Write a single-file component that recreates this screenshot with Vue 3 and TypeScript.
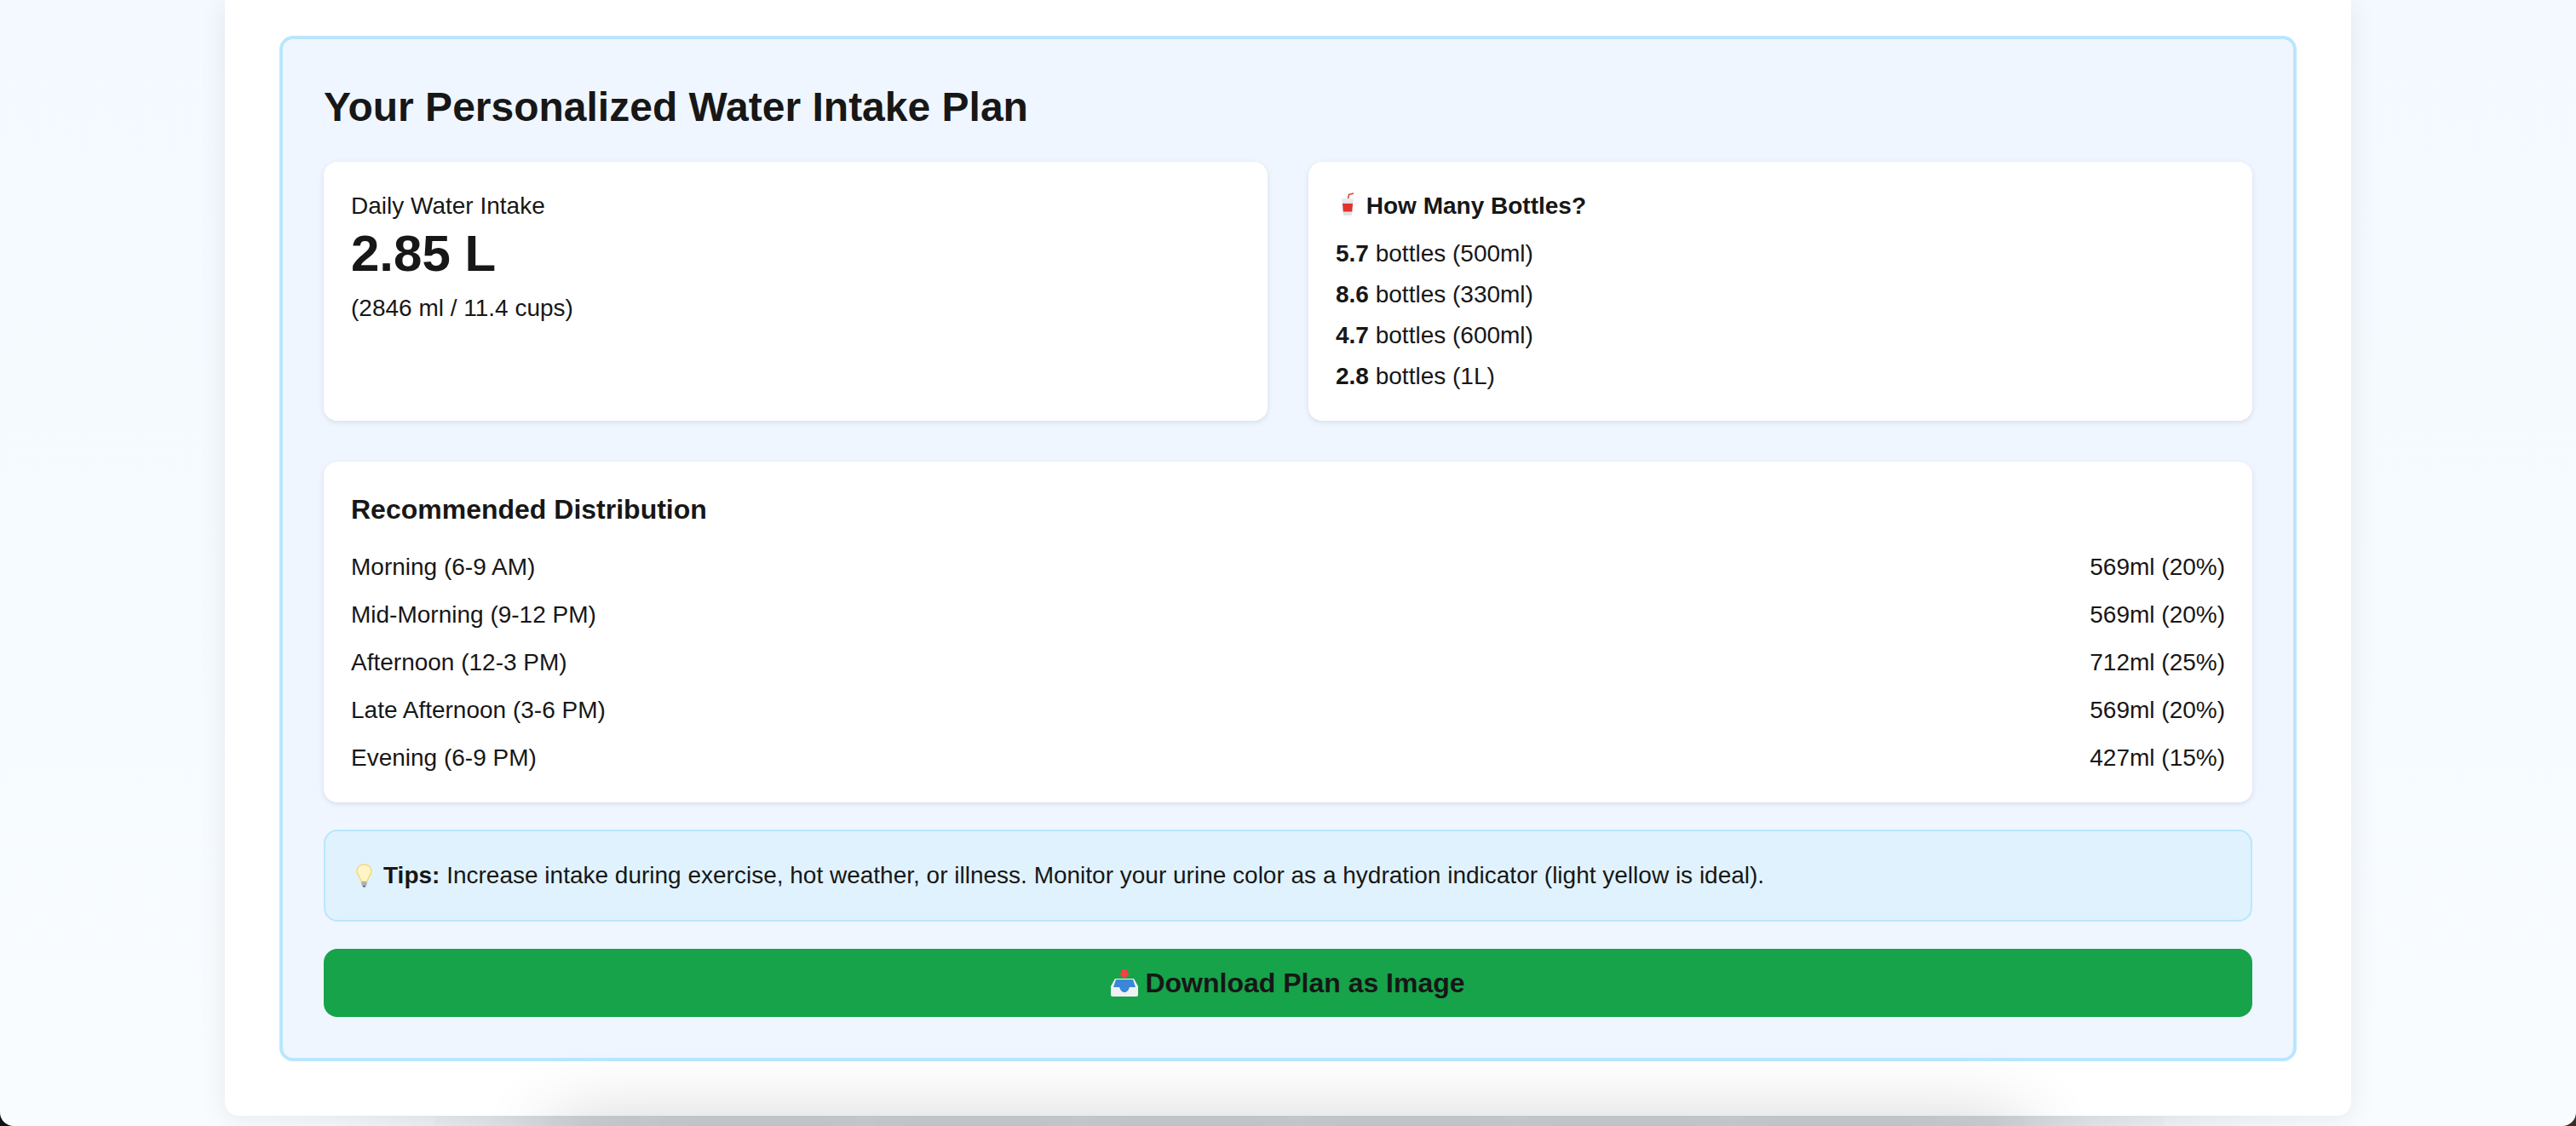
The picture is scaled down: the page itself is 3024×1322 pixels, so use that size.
<script setup lang="ts">
type BottleRow = { count: string; label: string };
type SlotRow = { name: string; amount: string };

const bottles: BottleRow[] = [
  { count: "5.7", label: "bottles (500ml)" },
  { count: "8.6", label: "bottles (330ml)" },
  { count: "4.7", label: "bottles (600ml)" },
  { count: "2.8", label: "bottles (1L)" },
];

const slots: SlotRow[] = [
  { name: "Morning (6-9 AM)", amount: "569ml (20%)" },
  { name: "Mid-Morning (9-12 PM)", amount: "569ml (20%)" },
  { name: "Afternoon (12-3 PM)", amount: "712ml (25%)" },
  { name: "Late Afternoon (3-6 PM)", amount: "569ml (20%)" },
  { name: "Evening (6-9 PM)", amount: "427ml (15%)" },
];
</script>

<template>
  <div class="page">
    <div class="window">
      <div class="under-shadow"></div>

      <main class="card">
        <section class="plan">
          <h2 class="plan-title">Your Personalized Water Intake Plan</h2>

          <div class="top-grid">
            <div class="box">
              <div class="intake-label">Daily Water Intake</div>
              <div class="intake-value">2.85 L</div>
              <div class="intake-sub">(2846 ml / 11.4 cups)</div>
            </div>
            <div class="box bottles">
              <h3 class="bottles-title">
                <svg class="emoji" viewBox="0 0 28 32" aria-hidden="true">
                  <path d="M14.5 10 L15.5 4.5 L21 3" fill="none" stroke="#e0483f" stroke-width="1.6" />
                  <rect x="7" y="9" width="14" height="4" rx="1.5" fill="#e8eaec" />
                  <path d="M7.6 13 H20.4 L19.2 27.5 Q19 29 17.5 29 H10.5 Q9 29 8.8 27.5 Z" fill="#dfe2e4" />
                  <path d="M8 15 H20 L19.2 24.5 H8.8 Z" fill="#e2322c" />
                </svg>
                How Many Bottles?
              </h3>
              <div v-for="row in bottles" :key="row.label + row.count" class="bottle-row">
                <strong>{{ row.count }}</strong> {{ row.label }}
              </div>
            </div>
          </div>

          <div class="box dist">
            <h3 class="dist-title">Recommended Distribution</h3>
            <div v-for="slot in slots" :key="slot.name" class="dist-row">
              <span>{{ slot.name }}</span>
              <span>{{ slot.amount }}</span>
            </div>
          </div>

          <div class="tips">
            <svg class="emoji bulb" viewBox="0 0 28 32" aria-hidden="true">
              <path d="M13.5 3 C8.2 3 5 6.6 5 11 C5 15.4 9.2 17.4 10 23 H17 C17.8 17.4 22 15.4 22 11 C22 6.6 18.8 3 13.5 3 Z" fill="#fff4c4" stroke="#f5d976" stroke-width="1.4" />
              <rect x="10.2" y="23" width="6.6" height="4.6" rx="1" fill="#adb1b5" />
              <rect x="11.6" y="27.6" width="3.8" height="2" rx="1" fill="#5f6367" />
            </svg>
            <strong>Tips:</strong> Increase intake during exercise, hot weather, or illness. Monitor your urine color as a hydration indicator (light yellow is ideal).
          </div>

          <button type="button" class="download">
            <svg class="tray" viewBox="0 0 32 32" aria-hidden="true">
              <path d="M13 0 H19 V4 H23 L16 11 L9 4 H13 Z" fill="#f0443e" />
              <path d="M5 11 H27 L32 20 V30 Q32 32 30 32 H2 Q0 32 0 30 V20 Z" fill="#f0f1f2" />
              <path d="M6 12 H26 L29 21 H22 Q20 27 16 27 Q12 27 10 21 H3 Z" fill="#3a86d8" />
            </svg>
            Download Plan as Image
          </button>
        </section>
      </main>

      <div class="over-shadow"></div>
    </div>
  </div>
</template>

<style scoped>
.page {
  height: 1322px;
  background: linear-gradient(90deg, #111 50%, #3d2c2c 50%);
  font-family: "Liberation Sans", Arial, sans-serif;
  color: #171717;
}

.window {
  position: relative;
  height: 100%;
  overflow: hidden;
  background: linear-gradient(180deg, #f3f9ff 0%, #f8fcff 100%);
  border-radius: 0 0 16px 16px;
}

.card {
  position: relative;
  z-index: 1;
  width: 2496px;
  height: 1310px;
  margin: 0 auto;
  padding: 42px 64px 64px;
  box-sizing: border-box;
  background: #fff;
  border-radius: 0 0 16px 16px;
  box-shadow: 0 4px 32px rgba(0, 0, 0, 0.08);
}

.plan {
  background: #eff6ff;
  border: 4px solid #bae6fd;
  border-radius: 16px;
  padding: 48px;
}

.plan-title {
  margin: 0 0 32px;
  font-size: 48px;
  line-height: 64px;
  font-weight: 700;
}

.top-grid {
  display: grid;
  grid-template-columns: 1fr 1fr;
  gap: 48px;
  margin-bottom: 48px;
}

.box {
  background: #fff;
  border-radius: 16px;
  padding: 32px;
  box-shadow: 0 2px 6px rgba(0, 0, 0, 0.1);
}

.intake-label {
  font-size: 28px;
  line-height: 40px;
}

.intake-value {
  margin: 6px 0 14px;
  font-size: 60px;
  line-height: 60px;
  font-weight: 700;
}

.intake-sub {
  font-size: 28px;
  line-height: 40px;
}

.bottles {
  padding-bottom: 28px;
}

.bottles-title {
  margin: 0 0 12px;
  font-size: 28px;
  line-height: 40px;
  font-weight: 700;
}

.bottle-row {
  font-size: 28px;
  line-height: 48px;
}

.dist {
  padding-bottom: 24px;
}

.dist-title {
  margin: 0 0 16px;
  font-size: 32px;
  line-height: 48px;
  font-weight: 700;
}

.dist-row {
  display: flex;
  justify-content: space-between;
  font-size: 28px;
  line-height: 56px;
}

.tips {
  margin-top: 32px;
  height: 108px;
  box-sizing: border-box;
  padding: 0 32px;
  display: flex;
  align-items: center;
  white-space: pre-wrap;
  background: #e0f2fe;
  border: 2px solid #bae6fd;
  border-radius: 16px;
  font-size: 28px;
}

.download {
  display: flex;
  align-items: center;
  justify-content: center;
  width: 100%;
  height: 80px;
  margin-top: 32px;
  border: 0;
  border-radius: 16px;
  background: #16a34a;
  color: #171717;
  font-family: inherit;
  font-size: 32px;
  font-weight: 700;
}

.emoji {
  width: 28px;
  height: 32px;
  vertical-align: -5px;
}

.bulb {
  margin-right: 8px;
}

.tray {
  width: 32px;
  height: 32px;
  margin-right: 8px;
}

/* band below the card, behind it; the box stays hidden behind the card */
.under-shadow {
  position: absolute;
  left: 500px;
  width: 2024px;
  top: 900px;
  height: 300px;
  box-shadow: 0 300px 200px rgba(0, 0, 0, 0.14);
}

/* the soft haze that falls over the bottom of the card */
.over-shadow {
  position: absolute;
  z-index: 2;
  left: 680px;
  width: 1664px;
  top: 1350px;
  height: 60px;
  pointer-events: none;
  box-shadow: 0 0 90px 30px rgba(0, 0, 0, 0.2);
}
</style>
